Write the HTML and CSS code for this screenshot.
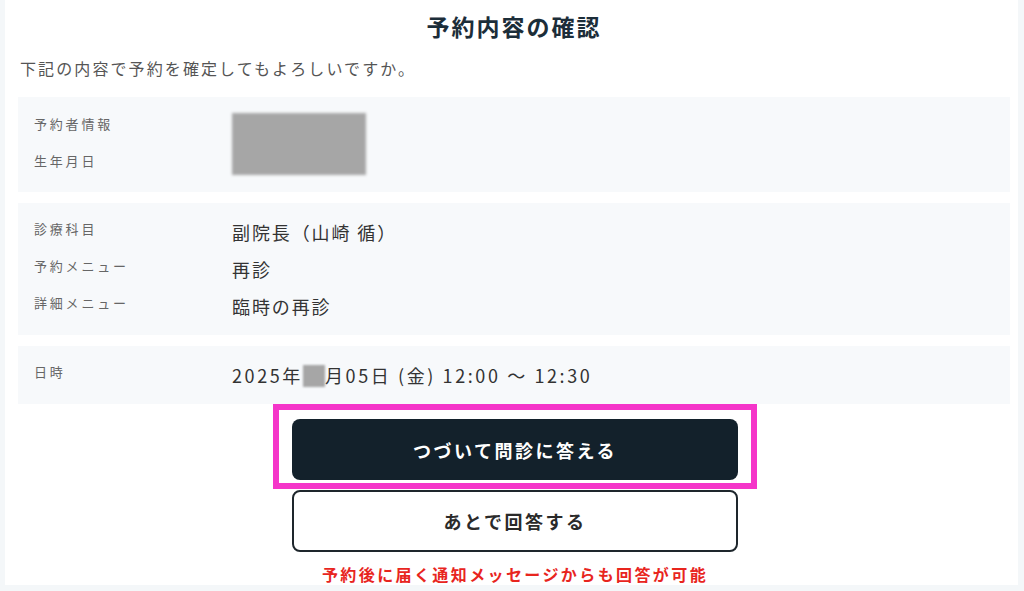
FILE: index.html
```html
<!DOCTYPE html>
<html lang="ja">
<head>
    <meta charset="UTF-8">
    <meta name="viewport" content="width=device-width, initial-scale=1.0">
    <title>予約内容の確認</title>
    <link rel="stylesheet" href="styles.css">
</head>
<body>
    <div class="card">
        <h1 class="title">予約内容の確認</h1>
        <p class="lead">下記の内容で予約を確定してもよろしいですか。</p>

        <div class="section">
            <div class="labels">
                <div class="label">予約者情報</div>
                <div class="label">生年月日</div>
            </div>
            <div class="masked"></div>
        </div>

        <div class="section">
            <dl class="rows">
                <dt>診療科目</dt><dd>副院長（山崎 循）</dd>
                <dt>予約メニュー</dt><dd>再診</dd>
                <dt>詳細メニュー</dt><dd>臨時の再診</dd>
            </dl>
        </div>

        <div class="section">
            <dl class="rows">
                <dt>日時</dt><dd class="date">2025年<span class="blur"></span>月05日 (金) 12:00 〜 12:30</dd>
            </dl>
        </div>

        <div class="actions">
            <div class="highlight">
                <button class="btn btn-primary">つづいて問診に答える</button>
            </div>
            <button class="btn btn-outline">あとで回答する</button>
            <p class="note">予約後に届く通知メッセージからも回答が可能</p>
        </div>
    </div>
</body>
</html>
```

FILE: styles.css
```css
body {
    margin: 0;
    padding: 0 6px 0 5px;
    background: #f4f7f9;
    font-family: "Noto Sans CJK JP", "Noto Sans", sans-serif;
    color: #333;
}

.card {
    background: #fff;
    height: 585px;
    padding: 0 8px 0 13px;
    box-sizing: border-box;
}

.title {
    margin: 0;
    padding-top: 9px;
    height: 37px;
    font-size: 23px;
    line-height: 34px;
    font-weight: 700;
    text-align: center;
    color: #1c2d39;
    letter-spacing: 2px;
}

.lead {
    margin: 0;
    padding: 7px 0 0 2px;
    height: 44px;
    font-size: 16px;
    line-height: 30px;
    color: #555;
    letter-spacing: 2.1px;
}

.section {
    background: #f7f9fb;
    display: flex;
    margin-bottom: 11px;
    padding: 0 16px;
}

.section:first-of-type {
    height: 95px;
}

.labels {
    width: 198px;
    padding-top: 17px;
}

.label {
    font-size: 13px;
    line-height: 20px;
    height: 37px;
    color: #666;
    letter-spacing: 2.8px;
}

.masked {
    width: 134px;
    height: 62px;
    margin-top: 16px;
    background: #a6a6a6;
    filter: blur(1.5px);
}

.rows {
    display: grid;
    grid-template-columns: 198px 1fr;
    row-gap: 10px;
    margin: 0;
    padding: 16px 0 15px;
}

.rows dt {
    font-size: 13px;
    line-height: 27px;
    color: #666;
    letter-spacing: 2.8px;
    margin-top: -4px;
}

.rows dd {
    margin: 0;
    font-size: 18px;
    line-height: 27px;
    color: #333;
    letter-spacing: 1.9px;
}

.rows .date {
    letter-spacing: 2.6px;
}

.section:last-of-type {
    height: 56px;
}

.section:last-of-type .rows {
    padding: 16px 0 0;
}

.section:last-of-type .rows dt {
    margin-top: -7px;
}

.blur {
    display: inline-block;
    width: 22px;
    height: 22px;
    vertical-align: -4px;
    background: #a6a6a6;
    filter: blur(1px);
}

.actions {
    display: flex;
    flex-direction: column;
    align-items: center;
    margin-top: -11px;
    padding-left: 2px;
}

.highlight {
    border: 6px solid #f535c9;
    padding: 9px 13px 3px 13px;
}

.btn {
    display: block;
    width: 446px;
    height: 61px;
    border-radius: 8px;
    font-family: inherit;
    font-size: 18px;
    font-weight: 700;
    letter-spacing: 2.5px;
}

.btn-primary {
    background: #13212b;
    color: #fff;
    border: none;
}

.btn-outline {
    height: 62px;
    margin-top: 1px;
    background: #fff;
    color: #2a2a2a;
    border: 2px solid #1e262c;
}

.note {
    margin: 10px 0 0;
    font-size: 16px;
    line-height: 24px;
    font-weight: 700;
    color: #e8251e;
    letter-spacing: 2.4px;
}
```
